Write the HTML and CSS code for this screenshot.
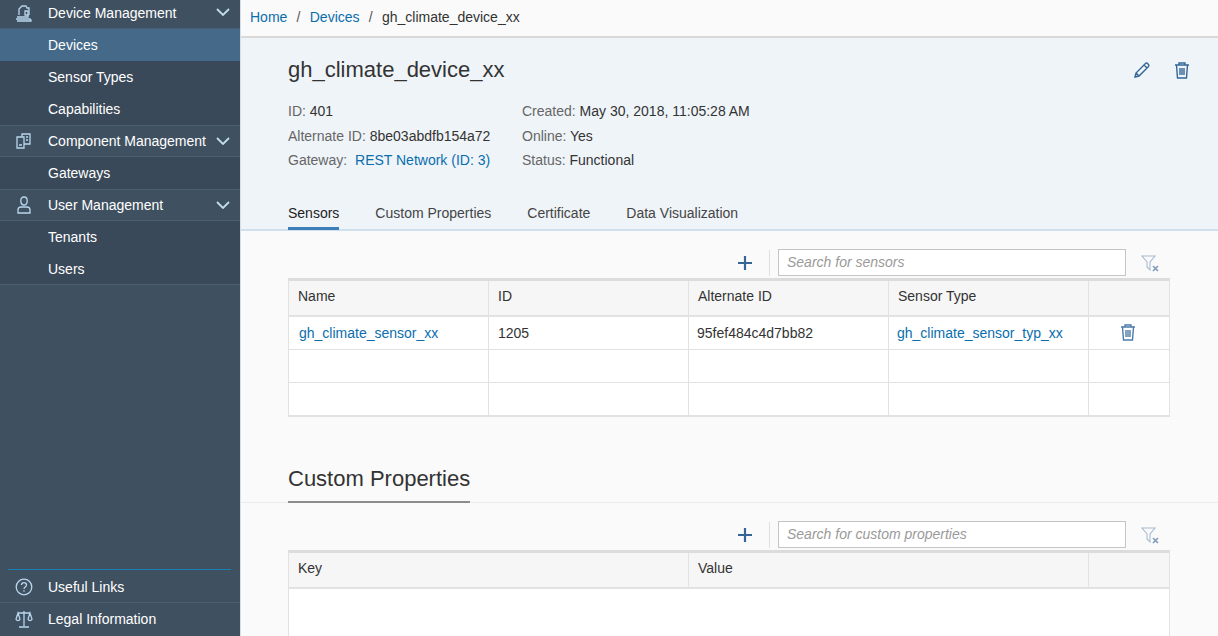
FILE: index.html
```html
<!DOCTYPE html>
<html lang="en">
<head>
<meta charset="utf-8">
<title>gh_climate_device_xx</title>
<link rel="stylesheet" href="styles.css">
</head>
<body>
<div class="app">
  <aside class="sidebar">
    <nav class="nav">
      <div class="row group first">
        <svg class="ico" viewBox="0 0 20 20"><path d="M5 12V6l3-3h4l1 2h2v7M3 14h11v-2M2 16h14l1 1v1H3" /><path d="M11 8h3v4h-3z"/></svg>
        <span class="label">Device Management</span>
        <svg class="chev" viewBox="0 0 14 8"><path d="M1 1l6 6 6-6"/></svg>
      </div>
      <div class="row active"><span class="label">Devices</span></div>
      <div class="row"><span class="label">Sensor Types</span></div>
      <div class="row"><span class="label">Capabilities</span></div>
      <div class="row group">
        <svg class="ico" viewBox="0 0 20 20"><path d="M3 6h7v11H3zM8 6V3h8v10h-6M5 14h3M12 6h2M12 9h2"/></svg>
        <span class="label">Component Management</span>
        <svg class="chev" viewBox="0 0 14 8"><path d="M1 1l6 6 6-6"/></svg>
      </div>
      <div class="row"><span class="label">Gateways</span></div>
      <div class="row group">
        <svg class="ico" viewBox="0 0 20 20"><path d="M4 18v-3c0-2 1.500-3 3-3h6c1.500 0 3 1 3 3v3z"/><path d="M10 2c2 0 3.200 1.500 3.200 3.700S12 10 10 10 6.800 8 6.800 5.700 8 2 10 2z"/></svg>
        <span class="label">User Management</span>
        <svg class="chev" viewBox="0 0 14 8"><path d="M1 1l6 6 6-6"/></svg>
      </div>
      <div class="row"><span class="label">Tenants</span></div>
      <div class="row"><span class="label">Users</span></div>
    </nav>
    <div class="foot">
      <div class="row link">
        <svg class="ico" viewBox="0 0 20 20"><circle cx="10" cy="10" r="7.800"/><path d="M7.500 8c0-1.500 1-2.300 2.500-2.300s2.500.9 2.500 2.200c0 2-2.500 2-2.500 4M10 13.300v1.400"/></svg>
        <span class="label">Useful Links</span>
      </div>
      <div class="row link">
        <svg class="ico" viewBox="0 0 20 20"><path d="M10 2v15M5 18h10M4 4h12M4 4l-2 6c0 2 4 2 4 0zM16 4l-2 6c0 2 4 2 4 0z"/></svg>
        <span class="label">Legal Information</span>
      </div>
    </div>
  </aside>
  <main class="main">
    <header class="crumbs">
      <a class="lnk">Home</a><span class="sep">/</span><a class="lnk">Devices</a><span class="sep">/</span><span>gh_climate_device_xx</span>
    </header>
    <section class="head">
      <div class="title-row">
        <h1 class="title">gh_climate_device_xx</h1>
        <div class="actions">
          <svg class="act" viewBox="0 0 20 20"><path d="M3 17l1-4L13.500 3.500c.7-.7 1.500-.7 2 0l1 1c.6.6.6 1.300 0 2L7 16zM12 5l3 3M4 13l3 3"/></svg>
          <svg class="act" viewBox="0 0 20 20"><path d="M3 5h14M7 5V3h6v2M4.500 5l1 13h9l1-13M8 8v7M10 8v7M12 8v7"/></svg>
        </div>
      </div>
      <div class="meta">
        <div class="meta-col">
          <div><span class="k">ID:</span> 401</div>
          <div><span class="k">Alternate ID:</span> 8be03abdfb154a72</div>
          <div><span class="k">Gateway:</span> <a class="lnk gw">REST Network (ID: 3)</a></div>
        </div>
        <div class="meta-col">
          <div><span class="k">Created:</span> May 30, 2018, 11:05:28 AM</div>
          <div><span class="k">Online:</span> Yes</div>
          <div><span class="k">Status:</span> Functional</div>
        </div>
      </div>
      <div class="tabs">
        <span class="tab on">Sensors</span>
        <span class="tab">Custom Properties</span>
        <span class="tab">Certificate</span>
        <span class="tab">Data Visualization</span>
      </div>
    </section>
    <section class="content">
      <div class="toolbar">
        <svg class="plus" viewBox="0 0 16 16"><path d="M8 1v14M1 8h14"/></svg>
        <span class="divider"></span>
        <div class="search">Search for sensors</div>
        <svg class="filter" viewBox="0 0 20 20"><path d="M2 3h13l-5 6v8l-3-3V9z"/><path class="x" d="M13 13l5 5M18 13l-5 5"/></svg>
      </div>
      <div class="table">
        <div class="tr th s"><div>Name</div><div>ID</div><div>Alternate ID</div><div>Sensor Type</div><div></div></div>
        <div class="tr s"><div><a class="lnk nudge-r">gh_climate_sensor_xx</a></div><div>1205</div><div><span class="nudge">95fef484c4d7bb82</span></div><div><a class="lnk nudge">gh_climate_sensor_typ_xx</a></div><div class="mid"><svg class="act small" viewBox="0 0 20 20"><path d="M3 5h14M7 5V3h6v2M4.500 5l1 13h9l1-13M8 8v7M10 8v7M12 8v7"/></svg></div></div>
        <div class="tr s"><div></div><div></div><div></div><div></div><div></div></div>
        <div class="tr s"><div></div><div></div><div></div><div></div><div></div></div>
      </div>
      <div class="section-head"><h2 class="h2">Custom Properties</h2></div>
      <div class="toolbar">
        <svg class="plus" viewBox="0 0 16 16"><path d="M8 1v14M1 8h14"/></svg>
        <span class="divider"></span>
        <div class="search">Search for custom properties</div>
        <svg class="filter" viewBox="0 0 20 20"><path d="M2 3h13l-5 6v8l-3-3V9z"/><path class="x" d="M13 13l5 5M18 13l-5 5"/></svg>
      </div>
      <div class="table">
        <div class="tr th c"><div>Key</div><div>Value</div><div></div></div>
        <div class="tr c tall"><div class="plain"></div><div class="plain"></div><div class="plain"></div></div>
      </div>
    </section>
  </main>
</div>
</body>
</html>
```
FILE: styles.css
```css
* { box-sizing: border-box; }
html, body { margin: 0; height: 636px; overflow: hidden; }
body { font-family: "Liberation Sans", Arial, sans-serif; font-size: 14px; color: #333; background: #fafafa; }
.app { display: flex; height: 636px; }

.sidebar { width: 240px; flex: none; background: #3f5161; display: flex; flex-direction: column; justify-content: space-between; color: #fff; }
.nav { background: #3f5161; }
.row { height: 32px; display: flex; align-items: center; background: #394959; padding-left: 48px; position: relative; }
.row .label { line-height: 1; }
.group { background: #3f5161; border-top: 1px solid #4a5f73; border-bottom: 1px solid #4a5f73; padding-left: 14px; }
.first { height: 29px; border-top: 0; padding-bottom: 3px; }
.active { background: #456a89; height: 32px; }
.nav > .row:last-child { height: 32px; border-bottom: 1px solid #4a5f73; }
.ico { width: 20px; height: 20px; flex: none; margin-right: 14px; fill: none; stroke: #b9d5ec; stroke-width: 1.300; }
.chev { width: 14px; height: 8px; position: absolute; left: 216px; top: 50%; margin-top: -4px; fill: none; stroke: #c3dbee; stroke-width: 1.800; }
.first .chev { margin-top: -6px; }

.foot .link { background: #3f5161; padding-left: 14px; height: 33px; padding-bottom: 2px; }
.foot .link:first-child { border-bottom: 1px solid #4a5f73; padding-top: 2px; padding-bottom: 0; }
.foot .link:first-child::before { content: ""; position: absolute; left: 8px; right: 9px; top: -1px; height: 1px; background: #1b7eb5; }

.main { flex: 1; min-width: 0; display: flex; flex-direction: column; border-left: 1px solid #d5dfe9; }
.crumbs { flex: none; height: 38px; padding: 0 0 2px 9px; display: flex; align-items: center; background: #fafafa; border-bottom: 2px solid #d9d9d9; }
.sep { margin: 0 9.250px; color: #555; }
.lnk { color: #0a6ead; }

.head { flex: none; height: 193px; background: #eff4f9; padding: 0 0 0 47px; border-bottom: 2px solid #cfdfee; display: flex; flex-direction: column; }
.title-row { display: flex; justify-content: space-between; align-items: center; padding: 18px 26px 0 0; }
.title { margin: 0; font-size: 22px; font-weight: 400; line-height: 27px; color: #333; }
.actions { display: flex; gap: 20px; }
.act { width: 20px; height: 20px; fill: none; stroke: #356595; stroke-width: 1.400; }
.act.small { stroke: #4d7ba8; }

.meta { display: flex; gap: 32px; margin-top: 16px; line-height: 24.500px; }
.k { color: #666; }
.gw { margin-left: 4px; }
.meta-col { flex: none; white-space: nowrap; }
.meta-col:first-child { width: 202px; }

.tabs { display: flex; gap: 36px; margin-top: auto; }
.tab { height: 33px; padding-top: 7px; line-height: 18px; color: #444; position: relative; margin-bottom: -1px; }
.tab.on { color: #222; border-bottom: 3px solid #3f7fb8; }

.content { flex: 1; padding: 0 48px 0 47px; background: #fafafa; }
.toolbar { height: 47px; display: flex; align-items: center; justify-content: flex-end; padding: 18px 14px 2px 0; }
.plus { width: 16px; height: 16px; fill: none; stroke: #356595; stroke-width: 2.200; }
.divider { width: 1px; height: 26px; background: #e0e0e0; margin: 0 8px 0 16px; }
.search { width: 348px; height: 27px; background: #fff; border: 1px solid #c5c5c5; padding-left: 8px; line-height: 25px; font-style: italic; color: #9a9a9a; }
.filter { width: 20px; height: 20px; margin-left: 14px; margin-right: -4px; fill: none; stroke: #a9bccf; stroke-width: 1.100; }
.filter .x { stroke: #7e9cba; stroke-width: 1.600; }

.table { border: 1px solid #e2e2e2; border-top: 3px solid #dcdcdc; background: #fff; }
.tr { display: grid; height: 33px; }
.tr > div { border-right: 1px solid #e2e2e2; border-bottom: 1px solid #e2e2e2; padding: 0 9px; display: flex; align-items: center; }
.tr > div:last-child { border-right: 0; }
.tr.s { grid-template-columns: 200px 200px 200px 200px 1fr; }
.tr.c { grid-template-columns: 400px 400px 1fr; }
.tr.th { height: 36px; background: #f6f6f6; }
.tr.th > div { border-bottom-width: 2px; padding-bottom: 5px; }
.tr.tall { height: 60px; }
.tr .plain { border-bottom: 0; border-right: 0; }
.tr .mid { justify-content: center; padding: 0 2px 3px 0; }
.nudge { margin-left: -1px; }
.nudge-r { margin-left: 1px; }

.section-head { flex: none; margin: 45px -48px 0 -47px; padding-left: 47px; border-bottom: 1px solid #ececec; height: 41px; }
.h2 { display: inline-block; margin: 0; height: 41px; font-size: 22px; font-weight: 400; line-height: 34px; color: #333; border-bottom: 2px solid #8c8c8c; }
```
